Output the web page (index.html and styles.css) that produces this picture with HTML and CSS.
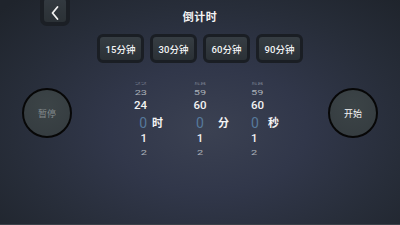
FILE: index.html
```html
<!DOCTYPE html>
<html>
<head>
<meta charset="utf-8">
<link rel="stylesheet" href="styles.css">
</head>
<body>
<div class="screen">
  <div class="top">
    <div class="back">
      <svg width="22" height="18" viewBox="0 0 22 18"><path d="M13.5 3 L8.5 9 L13.5 15" fill="none" stroke="#f2f2f2" stroke-width="1.8" stroke-linecap="round" stroke-linejoin="round"/></svg>
    </div>
    <div class="title">倒计时</div>
  </div>
  <div class="presets">
    <div class="preset">15分钟</div>
    <div class="preset">30分钟</div>
    <div class="preset">60分钟</div>
    <div class="preset">90分钟</div>
  </div>
  <div class="main">
    <div class="circle pause">暂停</div>
    <div class="picker">
      <div class="n tiny c1">22</div><div></div><div class="n tiny c3">58</div><div></div><div class="n tiny c5">58</div><div></div>
      <div class="n far c1">23</div><div></div><div class="n far c3">59</div><div></div><div class="n far c5">59</div><div></div>
      <div class="n near c1">24</div><div></div><div class="n near c3">60</div><div></div><div class="n near c5">60</div><div></div>
      <div class="n sel c1">0</div><div class="unit u1">时</div><div class="n sel c3">0</div><div class="unit u2">分</div><div class="n sel c5">0</div><div class="unit u3">秒</div>
      <div class="n near c1">1</div><div></div><div class="n near c3">1</div><div></div><div class="n near c5">1</div><div></div>
      <div class="n far c1">2</div><div></div><div class="n far c3">2</div><div></div><div class="n far c5">2</div><div></div>
    </div>
    <div class="circle start">开始</div>
  </div>
</div>
</body>
</html>
```
FILE: styles.css
```css
* { box-sizing: border-box; }
html, body { margin: 0; padding: 0; }
body { width: 400px; height: 225px; overflow: hidden; }
.screen {
  width: 400px; height: 225px; overflow: hidden;
  font-family: Roboto, "Noto Sans CJK SC", sans-serif;
  background: radial-gradient(ellipse 70% 80% at 52% 58%, #3b4152 0%, #31374a 35%, #272d39 70%, #1f242c 100%);
  border-bottom: 1px solid #3b4149;
}
.top {
  height: 30px;
  display: grid;
  grid-template-columns: 1fr auto 1fr;
  align-items: start;
}
.back {
  margin-left: 40px; margin-top: -5px;
  width: 30px; height: 31px;
  border: 4px solid #1b1f25;
  border-radius: 7px;
  background: linear-gradient(#333a40, #2b3136);
  display: flex; align-items: center; justify-content: center;
  padding-top: 4px;
}
.back svg { display: block; }
.title {
  grid-column: 2;
  margin-top: 12px;
  color: #f4f4f4;
  font-size: 11px;
  font-weight: 700;
  letter-spacing: 0.5px;
  line-height: 12px;
}
.presets {
  margin-top: 4px;
  display: flex;
  justify-content: center;
  gap: 6px;
}
.preset {
  width: 47px; height: 29px;
  border: 3px solid #1a1e24;
  border-radius: 6px;
  background: linear-gradient(#363d43, #2b3136);
  color: #f2f3f4;
  font-size: 9.5px;
  font-weight: 500;
  display: flex; align-items: center; justify-content: center;
}
.main {
  display: grid;
  grid-template-columns: 50px 1fr 50px;
  padding: 0 22px;
  align-items: start;
}
.circle {
  margin-top: 25px;
  width: 50px; height: 50px;
  border-radius: 50%;
  border: 2.5px solid #070707;
  background: radial-gradient(circle at 50% 35%, #3c4447, #343b3f);
  display: flex; align-items: center; justify-content: center;
  font-size: 9px;
}
.pause { color: #848b8e; }
.start { color: #f4f4f4; }
.picker {
  justify-self: start;
  margin-left: 56px;
  margin-top: 16px;
  display: grid;
  grid-template-columns: 20px 37px 30px 35px 16px 16px;
  grid-template-rows: 8px 11px 16px 18px 13px 14px;
  align-items: center;
}
.n { line-height: 1; white-space: nowrap; }
.c1 { text-align: right; padding-right: 1px; }
.c3 { text-align: center; }
.c5 { text-align: left; padding-left: 1px; }
.tiny { font-size: 11px; color: #6f7686; transform: scaleY(0.32); }
.far { font-size: 11px; color: #aab0b8; transform: scaleY(0.72); }
.near { font-size: 11.5px; color: #f2f2f2; font-weight: 500; }
.sel { font-size: 14px; color: #56799c; }
.unit { font-size: 11px; font-weight: 700; color: #f4f4f4; line-height: 1; }
.u1 { padding-left: 4px; }
.u2 { padding-left: 3px; }
.u3 { padding-left: 2px; }
```
